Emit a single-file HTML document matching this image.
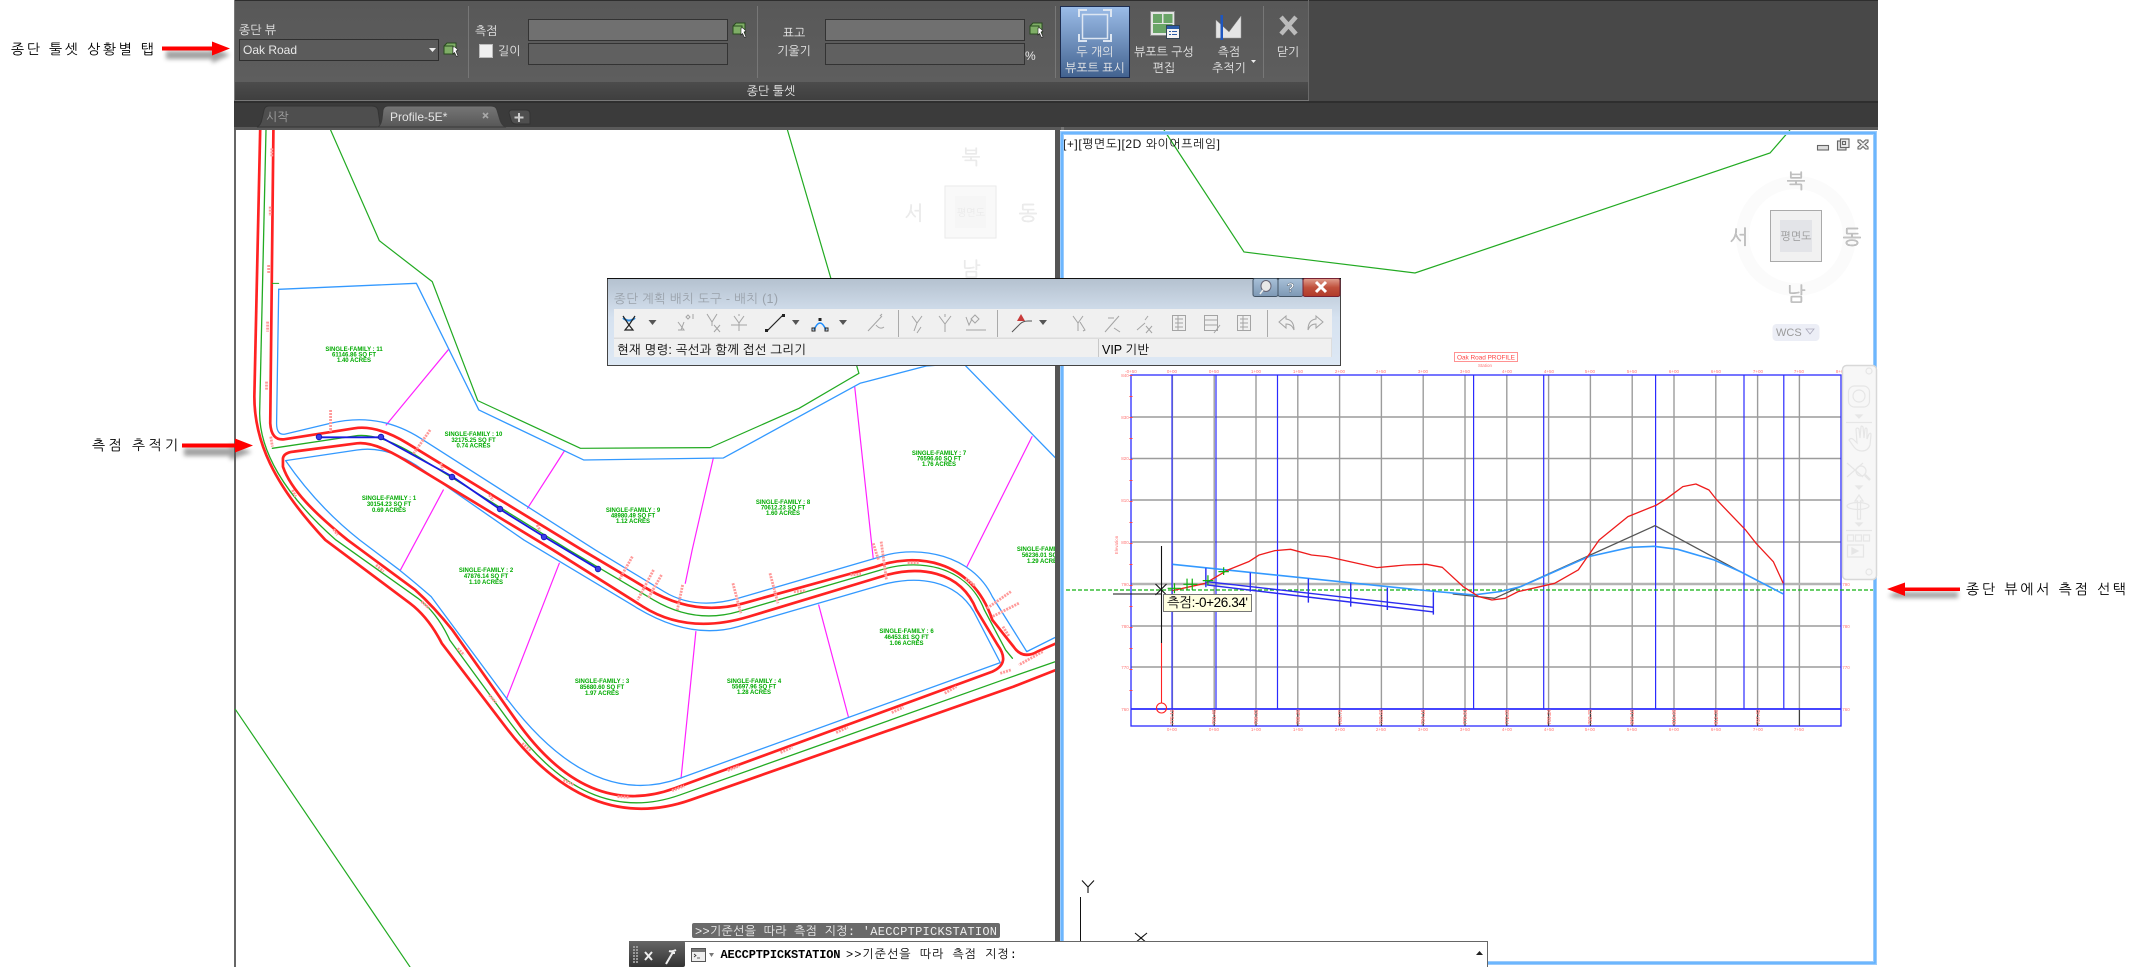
<!DOCTYPE html>
<html lang="ko"><head><meta charset="utf-8"><title>종단 툴셋</title>
<style>
html,body{margin:0;padding:0;background:#fff;width:2142px;height:967px;overflow:hidden}
svg{display:block;font-family:"Liberation Sans","NanumGothic","Noto Sans CJK KR",sans-serif}
.n *{vector-effect:non-scaling-stroke}
.m{font-family:"Liberation Mono","NanumGothic","Noto Sans CJK KR",monospace}
.w{fill:#e8e8e8;font-size:12px}
.c{text-anchor:middle}
.l text{font-size:6px;font-weight:bold;fill:#0a0;text-anchor:middle}
.t text{font-size:4.5px;fill:#f77;text-anchor:middle}
.b text{font-size:5px;font-weight:bold;fill:#f88;text-anchor:middle}
.i{fill:none;stroke:#a4a4a4;stroke-width:1}
.ik{fill:none;stroke:#222;stroke-width:1.2}
</style></head><body>
<svg width="2142" height="967" viewBox="0 0 2142 967" xmlns="http://www.w3.org/2000/svg">
<defs>
<linearGradient id="rb" x1="0" y1="0" x2="0" y2="1"><stop offset="0" stop-color="#585858"/><stop offset="1" stop-color="#5f5f5f"/></linearGradient>
<linearGradient id="rt" x1="0" y1="0" x2="0" y2="1"><stop offset="0" stop-color="#4c4c4c"/><stop offset="1" stop-color="#3f3f3f"/></linearGradient>
<linearGradient id="hl" x1="0" y1="0" x2="0" y2="1"><stop offset="0" stop-color="#9bbce8"/><stop offset="1" stop-color="#42628f"/></linearGradient>
<linearGradient id="tb" x1="0" y1="0" x2="0" y2="1"><stop offset="0" stop-color="#767676"/><stop offset="1" stop-color="#575757"/></linearGradient>
<linearGradient id="dl" x1="0" y1="0" x2="0" y2="1"><stop offset="0" stop-color="#b4c1cf"/><stop offset=".45" stop-color="#d6e2f0"/><stop offset="1" stop-color="#dde8f4"/></linearGradient>
<linearGradient id="cmd" x1="0" y1="0" x2="0" y2="1"><stop offset="0" stop-color="#666"/><stop offset="1" stop-color="#333"/></linearGradient>
<linearGradient id="xb" x1="0" y1="0" x2="0" y2="1"><stop offset="0" stop-color="#e0a090"/><stop offset=".5" stop-color="#c0503c"/><stop offset="1" stop-color="#b03a2a"/></linearGradient>
<linearGradient id="bb" x1="0" y1="0" x2="0" y2="1"><stop offset="0" stop-color="#a8c0d8"/><stop offset="1" stop-color="#7d98b4"/></linearGradient>
<clipPath id="lv"><rect x="235" y="130" width="820" height="837"/></clipPath>
<filter id="sh" x="-20%" y="-80%" width="140%" height="300%"><feGaussianBlur stdDeviation="2"/></filter>
<filter id="sf" x="-5%" y="-5%" width="110%" height="110%"><feGaussianBlur stdDeviation=".35"/></filter>
</defs>
<rect width="2142" height="967" fill="#fff"/>

<!-- LEFT VIEW -->
<rect x="234" y="130" width="2" height="837" fill="#666"/>
<g clip-path="url(#lv)">
<g class="n" transform="matrix(.5294 0 0 .3333 230 130)" fill="none" stroke-linejoin="round" stroke-linecap="round">
<!-- parcel -->
<g stroke="#22aa22" stroke-width="1.2">
<polyline points="190,0 282,332 382,455 468,812 662,955 907,953 1075,835 1188,730 1135,445 1053,0"/>
<polyline points="10,1738 340,2511"/>
</g>
<!-- lots -->
<g stroke="#ff22ff" stroke-width="1.2">
<path d="M413,658L295,885M632,962L562,1135M913,984L873,1260L860,1360M880,1505L852,1945M1180,770L1215,1285M1515,920L1392,1310M403,1080L322,1320M622,1300L522,1708M1112,1425L1168,1760"/>
</g>
<g stroke="#3399ff" stroke-width="1.3">
<path d="M92,478L88,880Q88,918 105,912L190,880Q281,845 360,925L690,1260L820,1385Q879,1442 960,1405L1240,1275C1300,1250 1400,1270 1440,1400L1505,1565L1568,1515"/>
<path d="M105,992L240,960Q298,946 360,1015L555,1230L770,1435Q871,1531 960,1490L1230,1365C1300,1335 1370,1350 1405,1445L1455,1598L850,1945Q680,2042 520,1700L380,1400Q355,1365 320,1320L245,1230Q165,1130 105,992Z"/>
<polyline points="92,478 352,460 470,840 668,990 932,984 1190,760 1315,708 1385,700 1560,985 1620,1100"/>
</g>
<!-- road -->
<g filter="url(#sf)">
<g stroke="#22aa22" stroke-width="1.3">
<path d="M68,0L56,850C56,960 100,1090 200,1230L355,1405Q392,1450 415,1530L530,1780Q675,2094 850,1995L1460,1650L1568,1590"/>
<path d="M80,955L235,918Q280,907 350,975L640,1260L800,1410Q878,1483 960,1445L1225,1322C1295,1285 1390,1300 1425,1440L1465,1560L1478,1585"/>
</g>
<g stroke="#ff2222" stroke-width="2.7">
<path d="M82,0L76,880Q78,932 102,928L235,895Q277,884 335,940L665,1260L790,1378Q878,1461 970,1420L1220,1310C1290,1270 1400,1280 1440,1470L1480,1550Q1497,1590 1525,1565L1568,1535"/>
<path d="M100,1010L100,985Q102,968 120,965L240,940Q272,934 330,990L610,1260L780,1430Q865,1515 980,1460L1230,1340C1300,1305 1380,1320 1410,1440L1450,1545Q1475,1600 1440,1625L840,1975Q674,2072 540,1770L420,1500Q385,1430 350,1380L222,1230C160,1150 115,1080 100,1010Z"/>
<path d="M57,0L46,800C46,930 80,1060 180,1230L340,1420Q375,1462 400,1540L520,1790Q677,2117 870,2010L1480,1670L1568,1615"/>
</g>
</g>
<!-- station labels strokes -->
<g stroke="#ff9a9a" stroke-width="2.8" stroke-dasharray="2 1" stroke-linecap="butt">
<path d="M79,55V82M76,230V258M73,405V432M71,575V605M69,755V782M190,840V905M378,900L345,975M77,920L80,950M398,1000L402,1020M490,1095L497,1112M580,1185L586,1202M118,1080L124,1100M196,1198L203,1215"/>
<path d="M760,1280L735,1350M800,1320L770,1410M815,1335L790,1405M855,1365L845,1440M950,1360L965,1450M1020,1330L1035,1420M1230,1235L1240,1350M1215,1240L1225,1290M1065,1385L1088,1382M1172,1335L1192,1332M1280,1298L1302,1298M1390,1345L1408,1368M1475,1385L1430,1435M1490,1420L1440,1460M1460,1490L1472,1520M1535,1565L1490,1605M1455,1630L1475,1620M1350,1690L1372,1670M1250,1748L1272,1732M1145,1808L1167,1792M1040,1868L1062,1852M940,1922L962,1908M835,1982L858,1968M732,2000L755,2002M630,1950L650,1965M552,1840L568,1862M490,1695L502,1718M430,1555L442,1575M362,1415L376,1435M276,1305L290,1325"/>
</g>
<g stroke="#1a1ae0" stroke-width="1.8"><polyline points="168,922 285,922 420,1040 510,1138 593,1220 695,1317"/></g>
<g stroke="#22aa22" stroke-width="1"><path d="M80,460H92"/></g>
</g>
<g fill="#3c3ce8" stroke="#1010b0" stroke-width=".8">
<circle cx="319" cy="437" r="2.8"/><circle cx="381" cy="437" r="2.8"/><circle cx="452" cy="477" r="2.8"/><circle cx="500" cy="509" r="2.8"/><circle cx="544" cy="537" r="2.8"/><circle cx="598" cy="569" r="2.8"/>
</g>
<g class="l">
<text x="354" y="351">SINGLE-FAMILY : 11</text><text x="354" y="356.5">61146.86 SQ FT</text><text x="354" y="362">1.40 ACRES</text>
<text x="473.5" y="436">SINGLE-FAMILY : 10</text><text x="473.5" y="442">32175.25 SQ FT</text><text x="473.5" y="447.5">0.74 ACRES</text>
<text x="389" y="500">SINGLE-FAMILY : 1</text><text x="389" y="506">30154.23 SQ FT</text><text x="389" y="512">0.69 ACRES</text>
<text x="633" y="512">SINGLE-FAMILY : 9</text><text x="633" y="517.5">48980.49 SQ FT</text><text x="633" y="523">1.12 ACRES</text>
<text x="783" y="504">SINGLE-FAMILY : 8</text><text x="783" y="509.5">70612.23 SQ FT</text><text x="783" y="515">1.60 ACRES</text>
<text x="939" y="455">SINGLE-FAMILY : 7</text><text x="939" y="460.5">76596.60 SQ FT</text><text x="939" y="466">1.76 ACRES</text>
<text x="486" y="572">SINGLE-FAMILY : 2</text><text x="486" y="578">47876.14 SQ FT</text><text x="486" y="584">1.10 ACRES</text>
<text x="602" y="683">SINGLE-FAMILY : 3</text><text x="602" y="689">85680.60 SQ FT</text><text x="602" y="695">1.97 ACRES</text>
<text x="754" y="683">SINGLE-FAMILY : 4</text><text x="754" y="688.5">55697.96 SQ FT</text><text x="754" y="694">1.28 ACRES</text>
<text x="906.5" y="633">SINGLE-FAMILY : 6</text><text x="906.5" y="639">46453.81 SQ FT</text><text x="906.5" y="645">1.06 ACRES</text>
<text x="1044" y="551">SINGLE-FAMILY : 5</text><text x="1044" y="557">56236.01 SQ FT</text><text x="1044" y="563">1.29 ACRES</text>
</g>
<!-- faded compass left -->
<g opacity=".75">
<rect x="945" y="186" width="51" height="52" fill="#f8f8f8" stroke="#e4e4e4"/>
<rect x="955" y="196" width="31" height="32" fill="#f3f3f3"/>
<text x="971" y="216" font-size="10" fill="#e4e4e4" text-anchor="middle">평면도</text>
<g fill="#e6e6e6" font-size="20" stroke="#ddd" stroke-width=".3" text-anchor="middle">
<text x="971" y="164">북</text><text x="971" y="276">남</text><text x="914" y="220">서</text><text x="1028" y="220">동</text></g>
</g>
</g>

<!-- RIGHT VIEW -->
<polyline points="1164,130 1244,252 1415,273 1770,153 1790,130" fill="none" stroke="#22aa22" stroke-width="1.2"/>
<text x="1063" y="148" font-size="12" fill="#111" textLength="157">[+][평면도][2D 와이어프레임]</text>

<!-- Compass -->
<circle cx="1796" cy="236" r="53.5" fill="none" stroke="#fbfbfb" stroke-width="13"/>
<rect x="1770.5" y="210.5" width="51" height="51" fill="#f1f1f1" stroke="#aaa"/>
<rect x="1780" y="220" width="32" height="32" fill="#e3e4e8"/>
<text x="1796" y="240" font-size="11" fill="#999" text-anchor="middle">평면도</text>
<g fill="#c4c4c4" stroke="#a8a8a8" stroke-width=".3" font-size="20" text-anchor="middle">
<text x="1796" y="188">북</text><text x="1796" y="301">남</text><text x="1739" y="244">서</text><text x="1852" y="244">동</text></g>
<rect x="1772.5" y="324" width="47" height="17" rx="4" fill="#eceef6"/>
<text x="1776" y="336" font-size="11" fill="#9a9a9a">WCS</text>
<path d="M1806,329h8l-4,5z" fill="none" stroke="#aab" stroke-width=".8"/>
<!-- win controls -->
<g fill="none" stroke="#666" stroke-width="1.1">
<rect x="1817.5" y="145.5" width="11" height="4.5" fill="#ddd"/>
<rect x="1837.5" y="141" width="8.5" height="9" fill="#ddd"/><rect x="1840.5" y="139" width="8.5" height="8.5" fill="#eee"/><rect x="1842.5" y="141.5" width="3" height="3"/>
<path d="M1858,140h2.500l2.500,2.500l2.500,-2.500h2.500v2l-3,2.500l3,2.500v2h-2.500l-2.500,-2.500l-2.500,2.500h-2.500v-2l3,-2.500l-3,-2.500z" fill="#eee"/>
</g>

<!-- Profile Grid -->
<g fill="none">
<path d="M1172.4,375V726M1214.2,375V726M1256,375V726M1297.8,375V726M1339.6,375V726M1381.4,375V726M1423.2,375V726M1465,375V726M1506.8,375V726M1548.6,375V726M1590.4,375V726M1632.2,375V726M1674,375V726M1715.8,375V726M1757.6,375V726M1799.4,375V726" stroke="#9c9c9c" stroke-width="1.4"/>
<path d="M1131,417H1841M1131,458.500H1841M1131,500H1841M1131,542H1841M1131,626H1841M1131,667H1841" stroke="#9c9c9c" stroke-width="1.4"/>
<path d="M1131,584H1841" stroke="#b4b4b4" stroke-width="2.4"/>
<path d="M1172,375V709M1216,375V709M1277.500,375V709M1473.600,375V709M1543.700,375V709M1655.600,375V709M1744,375V709M1783.800,375V709" stroke="#2b2bff" stroke-width="1.2"/>
<rect x="1131" y="375" width="710" height="351" stroke="#2b2bff" stroke-width="1.3"/>
<path d="M1131,709H1841" stroke="#2b2bff" stroke-width="1.8"/>
<path d="M1131,375v334" stroke="#f44" stroke-width="3" stroke-dasharray="1 20"/>
<path d="M1172.400,710v16M1214.200,710v16M1256,710v16M1297.800,710v16M1339.600,710v16M1381.400,710v16M1423.200,710v16M1465,710v16M1506.800,710v16M1548.600,710v16M1590.400,710v16M1632.200,710v16M1674,710v16M1715.800,710v16M1757.600,710v16M1799.400,710v16" stroke="#333" stroke-width="1"/>
<path d="M1060,590H1873" stroke="#10b010" stroke-width="1.2" stroke-dasharray="4 2"/>
<g class="n" transform="matrix(.523 0 0 .3333 1050 340)" stroke-linejoin="round">
<polyline stroke="#555" stroke-width="1.3" points="770,762 850,775 1157,557 1320,695"/>
<polyline stroke="#3399ff" stroke-width="1.6" points="234,673 720,752 810,765 860,755 900,740 1030,650 1110,622 1155,619 1200,628 1270,660 1320,695 1402,762"/>
<polyline stroke="#ee1c1c" stroke-width="1.3" points="234,752 297,730 340,690 380,665 400,645 430,632 460,628 500,645 530,650 625,683 680,675 720,673 750,682 790,740 820,770 845,780 870,775 895,755 965,730 1010,690 1050,600 1105,530 1160,495 1180,475 1210,440 1235,432 1260,450 1275,480 1330,570 1350,610 1383,665 1402,730"/>
<path stroke="#2b2bf0" stroke-width="1.4" d="M300,725L733,802M300,735L733,816M298,685V742M383,698V755M494,716V788M575,730V800M645,743V810M733,757V824"/>
<path stroke="#10b010" stroke-width="1.2" d="M225,745H250M238,730V760M255,733H282M262,716V750M272,716V750M292,722H312M302,706V735M322,695H342M332,682V705"/>
</g>
<path d="M1161.500,546V643" stroke="#111" stroke-width="1.1"/>
<path d="M1161.500,643V703" stroke="#f22" stroke-width="1.1"/>
<circle cx="1161.500" cy="708" r="5" stroke="#f22" stroke-width="1.1"/>
<path d="M1113,594H1162M1155.500,584l11,11M1166.500,584l-11,11" stroke="#111" stroke-width="1.1"/>
</g>
<rect x="1163.500" y="594.500" width="88" height="17" fill="#ffffe1" stroke="#777"/>
<text x="1167" y="607" font-size="13.500" fill="#000" textLength="81">측점:-0+26.34'</text>

<rect x="1454.500" y="352.500" width="63" height="9" fill="none" stroke="#f77" stroke-width=".8"/>
<text x="1486" y="359.500" font-size="6.500" fill="#f44" text-anchor="middle" textLength="58">Oak Road PROFILE</text>
<text x="1485" y="367" font-size="4.500" fill="#f77" text-anchor="middle">Station</text>
<g class="t">
<text x="1131" y="373">-0+50</text><text x="1172" y="373">0+00</text><text x="1214" y="373">0+50</text><text x="1256" y="373">1+00</text><text x="1298" y="373">1+50</text><text x="1340" y="373">2+00</text><text x="1381" y="373">2+50</text><text x="1423" y="373">3+00</text><text x="1465" y="373">3+50</text><text x="1507" y="373">4+00</text><text x="1549" y="373">4+50</text><text x="1590" y="373">5+00</text><text x="1632" y="373">5+50</text><text x="1674" y="373">6+00</text><text x="1716" y="373">6+50</text><text x="1758" y="373">7+00</text><text x="1799" y="373">7+50</text><text x="1841" y="373">8+00</text>
<text x="1125" y="377">840</text><text x="1125" y="419">830</text><text x="1125" y="460">820</text><text x="1125" y="502">810</text><text x="1125" y="544">800</text><text x="1125" y="586">790</text><text x="1125" y="628">780</text><text x="1125" y="669">770</text><text x="1125" y="711">760</text>
<text x="1846" y="377">840</text><text x="1846" y="419">830</text><text x="1846" y="460">820</text><text x="1846" y="502">810</text><text x="1846" y="544">800</text><text x="1846" y="586">790</text><text x="1846" y="628">780</text><text x="1846" y="669">770</text><text x="1846" y="711">760</text>
<text x="1172" y="731">0+00</text><text x="1214" y="731">0+50</text><text x="1256" y="731">1+00</text><text x="1298" y="731">1+50</text><text x="1340" y="731">2+00</text><text x="1381" y="731">2+50</text><text x="1423" y="731">3+00</text><text x="1465" y="731">3+50</text><text x="1507" y="731">4+00</text><text x="1549" y="731">4+50</text><text x="1590" y="731">5+00</text><text x="1632" y="731">5+50</text><text x="1674" y="731">6+00</text><text x="1716" y="731">6+50</text><text x="1758" y="731">7+00</text><text x="1799" y="731">7+50</text>
<text transform="translate(1118,545) rotate(-90)">Elevation</text>
</g>
<g class="b">
<text transform="translate(1174,717) rotate(-90)">775.12</text><text transform="translate(1216,717) rotate(-90)">781.40</text><text transform="translate(1258,717) rotate(-90)">786.33</text><text transform="translate(1300,717) rotate(-90)">788.20</text><text transform="translate(1342,717) rotate(-90)">786.75</text><text transform="translate(1383,717) rotate(-90)">783.60</text><text transform="translate(1425,717) rotate(-90)">784.18</text><text transform="translate(1467,717) rotate(-90)">778.91</text><text transform="translate(1509,717) rotate(-90)">772.55</text><text transform="translate(1551,717) rotate(-90)">780.24</text><text transform="translate(1592,717) rotate(-90)">792.73</text><text transform="translate(1634,717) rotate(-90)">808.10</text><text transform="translate(1676,717) rotate(-90)">815.66</text><text transform="translate(1718,717) rotate(-90)">812.38</text><text transform="translate(1760,717) rotate(-90)">797.42</text>
</g>

<!-- view frames -->
<rect x="1055" y="130" width="5" height="837" fill="#555"/>
<rect x="1062" y="133" width="813" height="830" fill="none" stroke="#9ccbfb" stroke-width="4"/>
<rect x="1062" y="133" width="813" height="830" fill="none" stroke="#5cb0ff" stroke-width="1.500"/>

<!-- Nav bar -->
<rect x="1842.500" y="365.500" width="34" height="214" rx="4" fill="#f7f7f7" stroke="#d8d8d8" stroke-width="1.500"/>
<g fill="none" stroke="#e6e6e6" stroke-width="1.200">
<circle cx="1869" cy="371" r="3"/>
<rect x="1848.500" y="386" width="21" height="21" rx="6"/><circle cx="1859" cy="396" r="6"/>
<path d="M1856,415h6l-3,3z" fill="#e6e6e6"/><path d="M1846,422.500h26"/>
<path d="M1849,440l5,7q3,4 8,4q6,0 8,-6l1,-10q0,-3 -2,-1l-2,5l0,-10q-1,-2 -2,0l-1,9l-1,-11q-2,-2 -2,0l-1,11l-1,-9q-2,-2 -3,0l1,14l-3,-3q-3,-3 -5,0z"/>
<path d="M1847,463l16,14M1863,463l-16,14"/><circle cx="1861" cy="471" r="5"/><path d="M1865,475l5,5" stroke-width="2.500"/>
<path d="M1856,486h6l-3,3z" fill="#e6e6e6"/>
<path d="M1859,495l-4,6h2.500v18h3v-18h2.500z"/><ellipse cx="1858" cy="506" rx="11" ry="3.500"/>
<path d="M1856,523h6l-3,3z" fill="#e6e6e6"/><path d="M1846,530.500h26"/>
<rect x="1847.500" y="535" width="6" height="6"/><rect x="1855.500" y="535" width="6" height="6"/><rect x="1863.500" y="535" width="6" height="6"/>
<rect x="1847.500" y="545" width="16" height="12"/><path d="M1852,548v6l6,-3z" fill="#e6e6e6"/>
<circle cx="1869" cy="572" r="3"/>
</g>

<!-- UCS -->
<path d="M1080.500,897V941" stroke="#111" stroke-width="1"/>
<path d="M1082,880.500l6,6.500l6,-6.500M1088,887v6" fill="none" stroke="#111" stroke-width="1.100"/>
<path d="M1135,933l12,10M1147,933l-12,10" fill="none" stroke="#111" stroke-width="1.100"/>

<!-- RIBBON -->
<rect x="234" y="0" width="1644" height="130" fill="#3b3b3b"/>
<rect x="1308" y="0" width="570" height="103" fill="#484848"/>
<rect x="234" y="0" width="1075" height="100" fill="url(#rb)"/>
<rect x="234" y="82" width="1075" height="18" fill="url(#rt)"/>
<rect x="234" y="0" width="1644" height="1" fill="#2e2e2e"/>
<rect x="234" y="0" width="1" height="103" fill="#777"/>
<rect x="1308" y="0" width="1" height="100" fill="#6a6a6a"/>
<rect x="234" y="100" width="1075" height="1" fill="#777"/>
<rect x="234" y="101" width="1644" height="2" fill="#2e2e2e"/>
<rect x="234" y="103" width="1644" height="24" fill="#3b3b3b"/>
<rect x="234" y="127" width="1644" height="3" fill="#5a5a5a"/>
<rect x="1061" y="127" width="3" height="3" fill="#777"/>
<g fill="#777"><rect x="468" y="6" width="1" height="72"/><rect x="757" y="6" width="1" height="72"/><rect x="1055" y="6" width="1" height="72"/><rect x="1263" y="6" width="1" height="72"/></g>

<text x="239" y="34" class="w">종단 뷰</text>
<rect x="239.500" y="39.500" width="199" height="21" fill="#5b5b5b" stroke="#2f2f2f"/>
<text x="243" y="54" class="w" fill="#eee">Oak Road</text>
<path d="M429,48h7l-3.500,4z" fill="#eee"/>

<text x="475" y="35" class="w">측점</text>
<rect x="479.500" y="44.500" width="13" height="13" fill="#f0f0f0" stroke="#bbb"/>
<text x="498" y="55" class="w">길이</text>
<rect x="528.500" y="19.500" width="199" height="21" fill="#707070" stroke="#333"/>
<rect x="528.500" y="43.500" width="199" height="21" fill="#606060" stroke="#333"/>

<text x="794" y="37" class="w c">표고</text>
<text x="794" y="55" class="w c">기울기</text>
<rect x="825.500" y="19.500" width="199" height="21" fill="#707070" stroke="#333"/>
<rect x="825.500" y="43.500" width="199" height="21" fill="#606060" stroke="#333"/>
<text x="1025" y="60" class="w">%</text>

<!-- green cube pickers -->
<g stroke="#2a4a20" stroke-width="1">
<path d="M444,46l3,-3h9v11h-12z" fill="#7fae66"/><path d="M444,46h9v8" fill="none"/><path d="M453,47l2,0l3,3l-2,1l2,5l-1.500,.5l-2,-4l-1.500,1.500z" fill="#fff" stroke="#222" stroke-width=".6"/>
<path d="M733,26l3,-3h9v11h-12z" fill="#7fae66"/><path d="M733,26h9v8" fill="none"/><path d="M741,28l2,0l3,3l-2,1l2,5l-1.500,.5l-2,-4l-1.500,1.500z" fill="#fff" stroke="#222" stroke-width=".6"/>
<path d="M1030,26l3,-3h9v11h-12z" fill="#7fae66"/><path d="M1030,26h9v8" fill="none"/><path d="M1038,28l2,0l3,3l-2,1l2,5l-1.500,.5l-2,-4l-1.500,1.500z" fill="#fff" stroke="#222" stroke-width=".6"/>
</g>

<!-- highlighted -->
<rect x="1060.500" y="6.500" width="69" height="71" fill="url(#hl)" stroke="#1c2c50"/>
<g fill="none" stroke="#dde6f2">
<rect x="1082.500" y="14.500" width="25" height="24" stroke-width="1.500"/>
<path d="M1079,17v-7h8M1103,10h8v7M1111,34v7h-8M1087,41h-8v-7" stroke-width="2"/>
</g>
<text x="1095" y="56" class="w c" fill="#f0f0f0">두 개의</text>
<text x="1095" y="72" class="w c" fill="#f0f0f0">뷰포트 표시</text>

<!-- viewport config -->
<rect x="1150.500" y="11.500" width="24" height="24" fill="#e4e4e4" stroke="#888"/>
<rect x="1153" y="14" width="9" height="9" fill="#6aa568"/><rect x="1163.500" y="14" width="9" height="9" fill="#6aa568"/><rect x="1153" y="24" width="19.500" height="9" fill="#6aa568"/>
<rect x="1166.500" y="25.500" width="13" height="13" fill="#f4f4f4" stroke="#345"/><rect x="1167" y="26" width="12" height="3" fill="#2c5ca8"/>
<path d="M1169,31.500h2M1172,31.500h5M1169,34.500h2M1172,34.500h5" stroke="#2c5ca8"/>
<text x="1164" y="56" class="w c">뷰포트 구성</text>
<text x="1164" y="72" class="w c">편집</text>

<!-- station tracker -->
<path d="M1216,20l13,12l12,-16v22h-25z" fill="#e4e4e4" stroke="#999" stroke-width=".5"/>
<rect x="1220.500" y="15" width="2.500" height="25" fill="#1f57c0"/>
<text x="1229" y="56" class="w c">측점</text>
<text x="1229" y="72" class="w c">추적기</text>
<path d="M1251,60h5l-2.500,3z" fill="#eee"/>

<!-- close -->
<path d="M1281,17l15,17M1296,17l-15,17" stroke="#bbb" stroke-width="4.500" fill="none"/>
<text x="1288" y="56" class="w c">닫기</text>
<text x="771" y="95" class="w c" font-size="12">종단 툴셋</text>

<!-- tabs -->
<path d="M257,127q4,-2 5,-8l2,-9q1,-4 5,-4h103q5,0 6,4l2,14q1,3 3,3z" fill="#4e4e4e" stroke="#343434"/>
<text x="266" y="121" font-size="12" fill="#a4a4a4">시작</text>
<path d="M378,127q3,-2 4,-8l1,-9q1,-4 5,-4h103q5,0 6,4l3,10q2,6 6,7z" fill="url(#tb)" stroke="#3a3a3a"/>
<text x="390" y="121" font-size="12" fill="#e4e4e4">Profile-5E*</text>
<path d="M483,113l5,5M488,113l-5,5" stroke="#a8a8a8" stroke-width="1.600"/>
<path d="M509,113q0,-3 3,-3h14q4,0 4,4v10h-14q-4,0 -5,-4z" fill="#4f4f4f" stroke="#333"/>
<path d="M519,113v9M514.500,117.500h9" stroke="#ccc" stroke-width="2"/>

<!-- DIALOG -->
<rect x="607.500" y="278.500" width="733" height="87" fill="url(#dl)" stroke="#444"/>
<rect x="607" y="278" width="734" height="1" fill="#111"/>
<text x="614" y="303" font-size="12.500" fill="#9aa2ab" textLength="164">종단 계획 배치 도구 - 배치 (1)</text>
<rect x="1253" y="278.500" width="25" height="18" rx="2" fill="url(#bb)" stroke="#456"/>
<rect x="1278" y="278.500" width="25" height="18" rx="2" fill="url(#bb)" stroke="#456"/>
<rect x="1303" y="278.500" width="37" height="18" rx="2" fill="url(#xb)" stroke="#723"/>
<ellipse cx="1266" cy="286" rx="5" ry="5.500" fill="#e8e8e8" stroke="#667"/><path d="M1260,294l3,-4" stroke="#eee" stroke-width="1.500"/>
<text x="1290.500" y="292" font-size="13" font-weight="bold" fill="#fff" stroke="#456" stroke-width=".4" text-anchor="middle">?</text>
<path d="M1316,282l10,10M1326,282l-10,10" stroke="#fff" stroke-width="3"/>
<rect x="614" y="309" width="718" height="48" fill="#f0f0f0"/>
<rect x="614" y="337.500" width="718" height="1.500" fill="#dcdcdc"/>
<rect x="1098" y="339" width="1" height="18" fill="#c8c8c8"/>
<rect x="1331" y="339" width="1" height="18" fill="#ddd"/>
<g fill="#aaa"><rect x="898" y="310" width="1" height="27"/><rect x="997" y="310" width="1" height="27"/><rect x="1267" y="310" width="1" height="27"/></g>
<text x="617" y="354" font-size="12.500" fill="#000" textLength="189">현재 명령: 곡선과 함께 접선 그리기</text>
<text x="1102" y="354" font-size="12.500" fill="#000">VIP 기반</text>
<!-- dialog icons -->
<path d="M623,318q6,5 12,0" fill="none" stroke="#2a8ae0" stroke-width="2"/>
<path d="M623,316l6,9l6,-9M629,325l-4,5h8l-4,-5" class="ik"/>
<g fill="#555"><path d="M648.500,320h8l-4,5z"/><path d="M792,320h7.500l-3.700,5z"/><path d="M839,320h8l-4,5z"/><path d="M1039,320h8l-4,5z"/></g>
<path class="i" d="M678,322l6,8l-3,0l3,-8M684,330h-6M688,315l2,2l-2,2l-2,-2z M693,314v5"/>
<path class="i" d="M707,314l5,8l5,-8M712,322v4M714,325l6,7M720,325l-6,7"/>
<path class="i" d="M734,316l5,7l5,-7M739,323v8M731,325h16M739,314v2"/>
<path class="ik" d="M767,331l16,-16"/><rect x="765" y="329" width="3" height="3" fill="#222"/><rect x="782" y="314" width="3" height="3" fill="#222"/>
<path d="M814,330q6,-14 12,0" fill="none" stroke="#1a8cff" stroke-width="1.600"/><rect x="812" y="328" width="3" height="3" fill="none" stroke="#222"/><rect x="825" y="328" width="3" height="3" fill="none" stroke="#222"/><rect x="818.500" y="318" width="3" height="3" fill="#222"/>
<path class="i" d="M868,331l14,-15M880,316l2,-2M876,325q4,5 8,2"/>
<path class="i" d="M912,316l5,7l5,-7M917,323l-3,8M921,327l-4,6"/>
<path class="i" d="M939,316l6,8l6,-8M945,324v8M945,314v3"/>
<path class="i" d="M966,317l3,8l3,-6M975,315l4,4l-4,4l-4,-4zM966,330h20"/>
<path d="M1017,321l4,-7l4,7z" fill="#c83a3a"/>
<path class="i" style="stroke:#555" d="M1012,332l8,-8q3,-3 8,-3h4"/>
<path class="i" d="M1073,316l5,7l5,-7M1078,323v8M1080,322l5,8l-2,1"/>
<path class="i" d="M1105,332l14,-16M1108,318l6,0M1114,328l6,4"/>
<path class="i" d="M1137,330l8,-7M1148,316l-3,4M1146,326l6,7M1152,326l-6,7" />
<rect class="i" x="1172.500" y="315.500" width="13" height="15"/><path class="i" d="M1175,319h8M1175,323h8M1175,327h8M1178,316v14"/>
<rect class="i" x="1204.500" y="315.500" width="13" height="15"/><path class="i" d="M1205,320h12M1205,325h12M1214,333l6,-8"/>
<rect class="i" x="1237.500" y="315.500" width="13" height="15"/><path class="i" d="M1240,319h8M1240,323h8M1240,327h8M1243,316v14"/>
<path class="i" d="M1286,316l-7,6l7,6v-4q6,0 8,6q0,-10 -8,-11z"/>
<path class="i" d="M1316,316l7,6l-7,6v-4q-6,0 -8,6q0,-10 8,-11z"/>

<!-- Tooltip + command -->
<rect x="692" y="923" width="308" height="15" rx="2" fill="#6a6a6a"/>
<text x="695" y="935" class="m" font-size="12" fill="#eee" textLength="302">&gt;&gt;기준선을 따라 측점 지정: 'AECCPTPICKSTATION</text>
<rect x="629.500" y="941.500" width="858" height="26" fill="#fff" stroke="#666"/>
<rect x="629" y="941" width="56" height="26" rx="2" fill="url(#cmd)"/>
<path d="M634,946v18M637,946v18" stroke="#999" stroke-width="2" stroke-dasharray="2 1"/>
<path d="M645,952l7,8M652,952l-7,8" stroke="#eee" stroke-width="2"/>
<path d="M666,964l7,-12M669,951q3,1 7,-1M672,953l3,0" fill="none" stroke="#eee" stroke-width="2"/>
<rect x="691.500" y="948.500" width="14" height="13" fill="#eee" stroke="#555"/><rect x="692" y="949" width="13" height="3" fill="#777"/>
<path d="M694,954l2,1.500l-2,1.500M697,958h3" stroke="#333" fill="none" stroke-width=".8"/>
<path d="M709,953h5l-2.500,4z" fill="#777"/>
<text x="720.500" y="958" class="m" font-size="12" font-weight="bold" fill="#000" textLength="120">AECCPTPICKSTATION</text>
<text x="846" y="958" class="m" font-size="12" fill="#000" textLength="171">&gt;&gt;기준선을 따라 측점 지정:</text>
<path d="M1476,955h7l-3.500,-4z" fill="#222"/>

<!-- Annotations -->
<text x="11" y="54" font-size="14" fill="#000" textLength="143">종단 툴셋 상황별 탭</text>
<text x="92" y="450" font-size="14" fill="#000" textLength="86">측점 추적기</text>
<text x="1966" y="594" font-size="14" fill="#000" textLength="160">종단 뷰에서 측점 선택</text>
<g fill="#555" opacity=".55" filter="url(#sh)"><path d="M166,51h46v-4l18,8l-18,8v-4h-46z"/><path d="M184,448h46v-4l22,8l-22,8v-4h-46z"/><path d="M1896,592h62v6h-62l-8,-2z"/></g>
<g fill="#f00">
<path d="M162,46.500h50v-5l18,7l-18,7v-5h-50z"/>
<path d="M182,443.500h53v-5l18,7l-18,7v-5h-53z"/>
<path d="M1960,587.500h-55v-5l-18,6.500l18,7v-5h55z"/>
</g>
</svg>
</body></html>
